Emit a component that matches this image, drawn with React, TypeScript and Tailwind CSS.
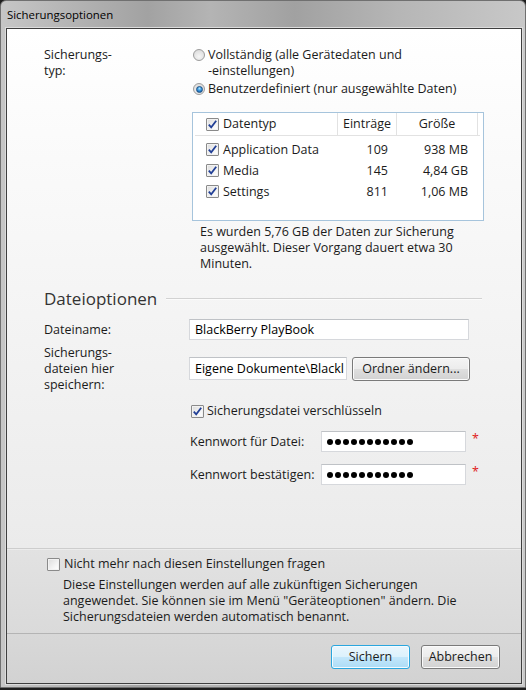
import React from "react";

function Check({ checked = true }: { checked?: boolean }) {
  return (
    <span className="relative inline-block w-[13px] h-[13px] shrink-0 border border-[#8a8a8a] rounded-[1px] bg-[linear-gradient(135deg,#dcdcdc,#f7f7f7_70%,#ffffff)]">
      <span className="absolute inset-0 border border-[#f2f2f2]" />
      {checked && (
        <svg width="11" height="11" viewBox="0 0 11 11" className="absolute left-0 top-0">
          <path d="M1.8 5.6 L4.2 8.3 L9.2 1.8" fill="none" stroke="#213f96" strokeWidth="1.8" />
        </svg>
      )}
    </span>
  );
}

function Radio({ on = false }: { on?: boolean }) {
  return (
    <span className="relative flex items-center justify-center w-[12px] h-[12px] shrink-0 rounded-full border border-[#9c9c9c] bg-[radial-gradient(circle_at_50%_65%,#f6f6f6,#d6d6d6)]">
      {on && (
        <span className="w-[7px] h-[7px] rounded-full border border-[#1d4f82] bg-[radial-gradient(circle_at_50%_30%,#a8e4ff,#2a8ad6_55%,#124f90)]" />
      )}
    </span>
  );
}

function Field({ w, h = 21, children }: { w: number; h?: number; children?: React.ReactNode }) {
  return (
    <div
      className="flex items-center pl-[5px] bg-white border border-[#d6d8dc] border-t-[#bfc2c6] text-black overflow-hidden whitespace-nowrap shrink-0"
      style={{ width: w, height: h }}
    >
      {children}
    </div>
  );
}

function Dots() {
  return (
    <div className="flex gap-[2px]">
      {Array.from({ length: 11 }).map((_, i) => (
        <span key={i} className="w-[6px] h-[6px] rounded-full bg-black" />
      ))}
    </div>
  );
}

function Btn({ children, def = false, w }: { children: React.ReactNode; def?: boolean; w: number }) {
  return (
    <div
      className={
        def
          ? "h-[24px] flex items-center justify-center rounded-[3px] border border-[#2aa6de] bg-[linear-gradient(#eaf6fd,#dcf1fc_50%,#c3e7fb_50%,#addcf6)] shadow-[inset_0_0_0_1px_#f4fbff] text-[#1b1b1b]"
          : "h-[24px] flex items-center justify-center rounded-[3px] border border-[#7a7a7a] bg-[linear-gradient(#f4f4f4,#ececec_50%,#dfdfdf_50%,#d2d2d2)] shadow-[inset_0_0_0_1px_#fbfbfb] text-[#1b1b1b]"
      }
      style={{ width: w }}
    >
      {children}
    </div>
  );
}

const rows = [
  { name: "Application Data", n: "109", s: "938 MB" },
  { name: "Media", n: "145", s: "4,84 GB" },
  { name: "Settings", n: "811", s: "1,06 MB" },
];

export default function App() {
  return (
    <div className="w-[526px] h-[690px] bg-[#1e1e1e] font-['Open_Sans',sans-serif] text-[12.5px] leading-[16px] text-[#1b1b1b]">
      <div className="h-[688px] flex flex-col border border-[#707070] rounded-t-[6px] bg-[linear-gradient(to_right,#c6c6c6,#b6b6b6_12%,#a2a2a2_28%,#b4b4b4_40%,#a1a1a1_56%,#b6b6b6_76%,#c8c8c8)] pl-[5px] pr-[3px] pb-[3px]">
        <div className="h-[27px] flex items-center pl-[1px] pt-[1px] text-[11.4px] text-black">Sicherungsoptionen</div>
        <div className="flex-1 flex flex-col border border-[#3f3f3f] shadow-[0_0_0_1px_#dcdcdc]">
          {/* top section */}
          <div className="h-[519px] flex flex-col pl-[37px] pr-[39px] pt-[18px] bg-[linear-gradient(#ffffff,#f6f6f6_45%,#ebebeb)]">
            <div className="flex">
              <div className="w-[149px] shrink-0">
                Sicherungs-
                <br />
                typ:
              </div>
              <div className="flex flex-col">
                <div className="flex items-start gap-[3px]">
                  <span className="mt-[2px]">
                    <Radio />
                  </span>
                  <div>
                    Vollständig (alle Gerätedaten und
                    <br />
                    -einstellungen)
                  </div>
                </div>
                <div className="flex items-start gap-[3px] mt-[2px]">
                  <span className="mt-[2px]">
                    <Radio on />
                  </span>
                  <div>Benutzerdefiniert (nur ausgewählte Daten)</div>
                </div>
                <div className="mt-[15px] -ml-[1px] w-[292px] h-[109px] border border-[#a6c4dc] bg-white">
                  <div className="ml-[2px] w-[285px] h-[23px] flex border-b border-[#e2e2e2]">
                    <div className="w-[142px] flex items-center pl-[11px] gap-[4px]">
                      <Check />
                      <span>Datentyp</span>
                    </div>
                    <div className="w-[59px] border-l border-[#e2e2e2] flex items-center justify-center">Einträge</div>
                    <div className="w-[81px] border-l border-[#e2e2e2] flex items-center justify-center">Größe</div>
                    <div className="w-[3px] border-l border-[#e2e2e2]" />
                  </div>
                  <div className="mt-[3px] flex flex-col">
                    {rows.map((r) => (
                      <div key={r.name} className="ml-[2px] h-[21px] flex items-center">
                        <div className="w-[142px] flex items-center pl-[11px] gap-[4px]">
                          <Check />
                          <span>{r.name}</span>
                        </div>
                        <div className="w-[59px] text-right pr-[8px]">{r.n}</div>
                        <div className="w-[81px] text-right pr-[9px]">{r.s}</div>
                      </div>
                    ))}
                  </div>
                </div>
                <div className="mt-[3px] ml-[7px]">
                  Es wurden 5,76 GB der Daten zur Sicherung
                  <br />
                  ausgewählt. Dieser Vorgang dauert etwa 30
                  <br />
                  Minuten.
                </div>
              </div>
            </div>

            <div className="mt-[16px] h-[22px] flex items-center">
              <span className="text-[17px] leading-[22px] text-[#333333]">Dateioptionen</span>
              <span className="flex-1 ml-[9px] h-[2px] border-t border-[#d2d2d2] border-b border-b-[#fbfbfb]" />
            </div>

            <div className="mt-[9px] flex">
              <div className="w-[145px] h-[21px] flex items-center">Dateiname:</div>
              <Field w={280}>BlackBerry PlayBook</Field>
            </div>

            <div className="mt-[5px] flex">
              <div className="w-[145px] shrink-0">
                Sicherungs-
                <br />
                dateien hier
                <br />
                speichern:
              </div>
              <div className="mt-[12px] flex gap-[5px] items-start">
                <Field w={158} h={23}>
                  <span className="block w-[150px] overflow-hidden whitespace-nowrap">Eigene Dokumente\Blackl</span>
                </Field>
                <Btn w={118}>Ordner ändern...</Btn>
              </div>
            </div>

            <div className="mt-[10px] pl-[147px] flex items-center gap-[3px]">
              <Check />
              <span>Sicherungsdatei verschlüsseln</span>
            </div>

            <div className="mt-[12px] pl-[146px] flex">
              <div className="w-[131px] h-[21px] flex items-center">Kennwort für Datei:</div>
              <Field w={145}>
                <Dots />
              </Field>
              <span className="ml-[6px] mt-[1px] text-[#e02020] leading-[14px]">*</span>
            </div>

            <div className="mt-[12px] pl-[146px] flex">
              <div className="w-[131px] h-[21px] flex items-center">Kennwort bestätigen:</div>
              <Field w={145}>
                <Dots />
              </Field>
              <span className="ml-[6px] mt-[1px] text-[#e02020] leading-[14px]">*</span>
            </div>
          </div>

          {/* footer */}
          <div className="h-[85px] border-t border-[#cdcdcd] bg-[linear-gradient(#e2e2e2,#dadada)] pl-[40px] pt-[7px] shadow-[inset_0_1px_0_#ececec]">
            <div className="flex items-center gap-[4px]">
              <Check checked={false} />
              <span>Nicht mehr nach diesen Einstellungen fragen</span>
            </div>
            <div className="mt-[5px] pl-[16px]">
              Diese Einstellungen werden auf alle zukünftigen Sicherungen
              <br />
              angewendet. Sie können sie im Menü "Geräteoptionen" ändern. Die
              <br />
              Sicherungsdateien werden automatisch benannt.
            </div>
          </div>

          {/* buttons */}
          <div className="flex-1 border-t border-[#b4b4b4] bg-[linear-gradient(#d8d8d8,#d2d2d2)] flex justify-end items-start gap-[11px] pr-[21px] pt-[11px]">
            <Btn w={79} def>
              Sichern
            </Btn>
            <Btn w={79}>Abbrechen</Btn>
          </div>
        </div>
      </div>
    </div>
  );
}
